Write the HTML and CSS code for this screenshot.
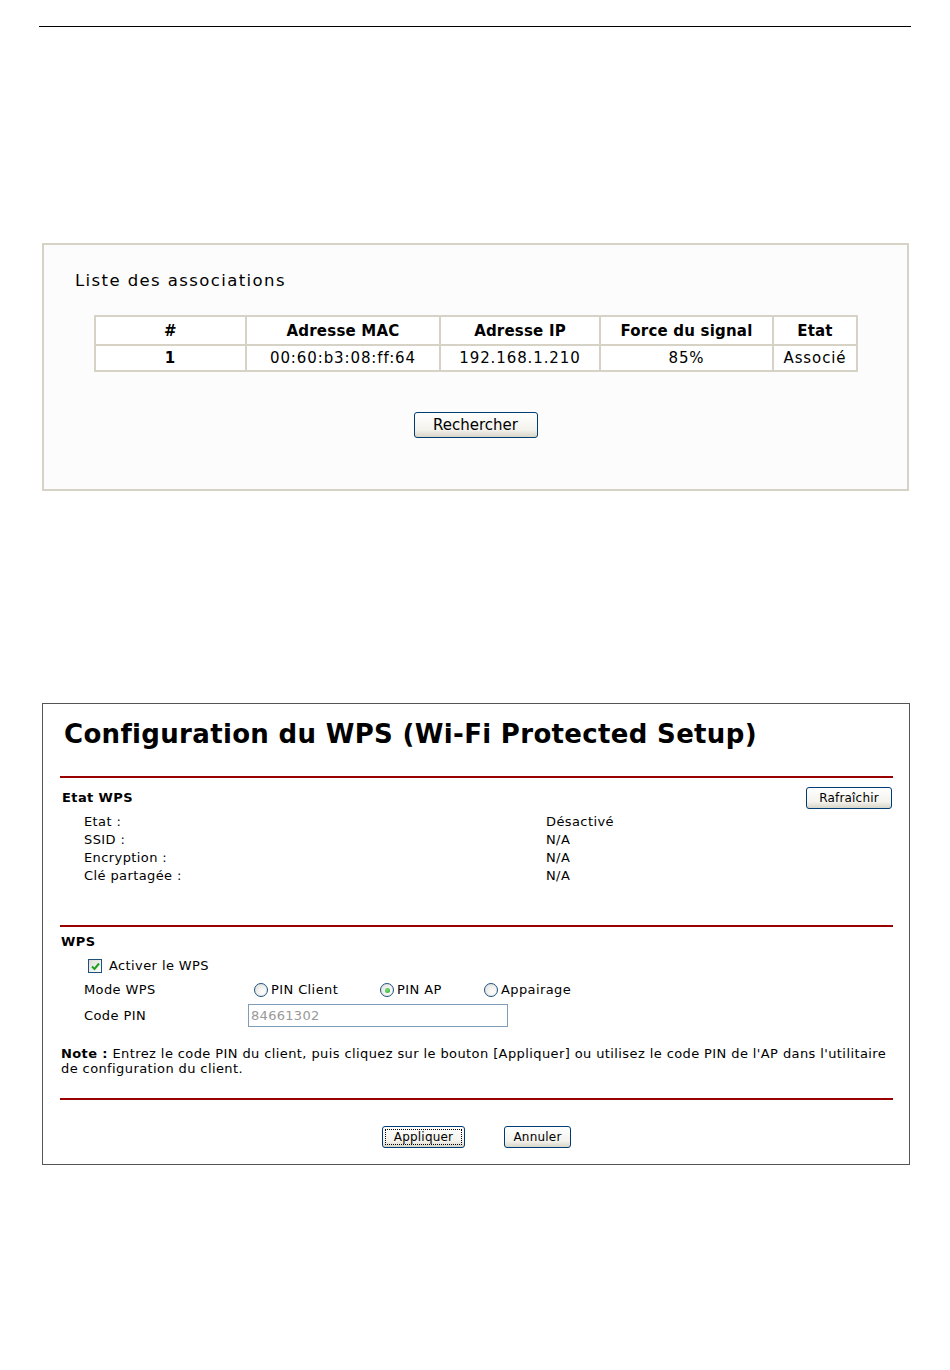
FILE: index.html
```html
<!DOCTYPE html>
<html lang="fr">
<head>
    <meta charset="UTF-8">
    <title>Liste des associations - Configuration du WPS</title>
    <link rel="stylesheet" href="styles.css">
</head>
<body>
    <div class="page-rule"></div>

    <div class="assoc-box">
        <h2 class="assoc-title">Liste des associations</h2>

        <table class="assoc-table">
            <tr>
                <th class="col-num">#</th>
                <th class="col-mac">Adresse MAC</th>
                <th class="col-ip">Adresse IP</th>
                <th class="col-signal">Force du signal</th>
                <th class="col-state">Etat</th>
            </tr>
            <tr>
                <td class="num">1</td>
                <td>00:60:b3:08:ff:64</td>
                <td>192.168.1.210</td>
                <td>85%</td>
                <td>Associé</td>
            </tr>
        </table>

        <div class="assoc-actions">
            <button class="xp-btn search-btn">Rechercher</button>
        </div>
    </div>

    <div class="wps-box">
        <h1 class="wps-title">Configuration du WPS (Wi-Fi Protected Setup)</h1>

        <div class="red-rule"></div>

        <div class="section-head">
            <span class="section-title">Etat WPS</span>
            <button class="xp-btn small-btn refresh-btn">Rafraîchir</button>
        </div>

        <div class="status-grid">
            <span>Etat :</span><span>Désactivé</span>
            <span>SSID :</span><span>N/A</span>
            <span>Encryption :</span><span>N/A</span>
            <span>Clé partagée :</span><span>N/A</span>
        </div>

        <div class="red-rule rule-wps"></div>

        <div class="section-title">WPS</div>

        <div class="check-row">
            <span class="checkbox">
                <svg width="9" height="9" viewBox="0 0 9 9"><path d="M1 4.5 L3.5 7 L8 1.5" fill="none" stroke="#21a121" stroke-width="2"/></svg>
            </span>
            <span>Activer le WPS</span>
        </div>

        <div class="form-row">
            <span class="form-label">Mode WPS</span>
            <div class="radios">
                <span class="radio-item r-client"><span class="radio"></span>PIN Client</span>
                <span class="radio-item r-ap"><span class="radio on"></span>PIN AP</span>
                <span class="radio-item"><span class="radio"></span>Appairage</span>
            </div>
        </div>

        <div class="form-row pin-row">
            <span class="form-label">Code PIN</span>
            <span class="pin-input">84661302</span>
        </div>

        <p class="note"><b>Note :</b> Entrez le code PIN du client, puis cliquez sur le bouton [Appliquer] ou utilisez le code PIN de l'AP dans l'utilitaire de configuration du client.</p>

        <div class="red-rule rule-bottom"></div>

        <div class="wps-actions">
            <button class="xp-btn small-btn apply-btn">Appliquer</button>
            <button class="xp-btn small-btn cancel-btn">Annuler</button>
        </div>
    </div>
</body>
</html>
```

FILE: styles.css
```css
body {
    margin: 0;
    padding: 26px 0 0 0;
    background-color: #fff;
    color: #000;
    font-family: "DejaVu Sans", Verdana, sans-serif;
}

.page-rule {
    margin-left: 39px;
    width: 872px;
    height: 1px;
    background-color: #000;
}

/* Liste des associations */

.assoc-box {
    margin: 216px 0 0 42px;
    width: 863px;
    border: 2px solid #d6d2c6;
    background-color: #fcfcfc;
    padding: 26px 0 51px 0;
}

.assoc-title {
    margin: 0 0 0 31px;
    font-size: 16.5px;
    letter-spacing: 1.4px;
    font-weight: normal;
    line-height: 20px;
}

.assoc-table {
    margin: 24px 0 0 50px;
    width: 764px;
    border-collapse: collapse;
    border: 2px solid #ccc8bc;
    background-color: #fff;
}

.assoc-table th,
.assoc-table td {
    border: 2px solid #d6d2c6;
    text-align: center;
    padding: 0;
}

.assoc-table th {
    height: 27px;
    font-size: 15px;
    font-weight: bold;
    letter-spacing: 0.2px;
}

.assoc-table td {
    height: 24px;
    font-size: 15px;
    letter-spacing: 0.9px;
}

.assoc-table td.num {
    font-weight: bold;
}

.col-num { width: 149px; }
.col-mac { width: 192px; }
.col-ip { width: 158px; }
.col-signal { width: 171px; }

.assoc-actions {
    margin-top: 40px;
    display: flex;
    justify-content: center;
}

.xp-btn {
    font-family: "DejaVu Sans", Verdana, sans-serif;
    color: #000;
    border: 1px solid #003c74;
    border-radius: 3px;
    background: linear-gradient(#ffffff, #f3f2ec 70%, #d8d5c8);
    padding: 0;
}

.search-btn {
    width: 124px;
    height: 26px;
    font-size: 15px;
}

/* Configuration du WPS */

.wps-box {
    margin: 212px 0 0 42px;
    width: 868px;
    border: 1px solid #555;
    padding: 0 16px 0 17px;
    box-sizing: border-box;
    font-size: 13px;
    letter-spacing: 0.4px;
}

.wps-title {
    margin: 13px 0 0 4px;
    font-size: 26px;
    letter-spacing: 0.33px;
    line-height: 34px;
    font-weight: bold;
}

.red-rule {
    height: 2px;
    background-color: #990000;
    margin-top: 25px;
}

.section-head {
    display: flex;
    justify-content: space-between;
    align-items: center;
    margin-top: 9px;
    padding-left: 1px;
}

.section-title {
    font-weight: bold;
    font-size: 13px;
    line-height: 18px;
    padding-left: 1px;
}

.small-btn {
    height: 22px;
    font-size: 12px;
    letter-spacing: 0.2px;
    padding: 0;
}

.refresh-btn { width: 86px; margin-right: 1px; }
.apply-btn { width: 83px; }
.cancel-btn { width: 67px; }

.status-grid {
    display: grid;
    grid-template-columns: 462px 1fr;
    line-height: 18px;
    padding-left: 24px;
    margin-top: 4px;
}

.rule-wps {
    margin-top: 40px;
}

.rule-wps + .section-title {
    margin-top: 6px;
}

.check-row {
    display: flex;
    align-items: center;
    gap: 7px;
    margin: 6px 0 0 28px;
    line-height: 18px;
}

.checkbox {
    width: 12px;
    height: 12px;
    border: 1px solid #1c5180;
    background: linear-gradient(135deg, #dcdcd7, #fff);
    display: flex;
    align-items: center;
    justify-content: center;
}

.form-row {
    display: flex;
    align-items: center;
    margin: 6px 0 0 24px;
    line-height: 18px;
}

.form-label {
    width: 164px;
}

.radios {
    display: flex;
    margin-left: 6px;
}

.radio-item {
    display: flex;
    align-items: center;
    gap: 3px;
}

.r-client { width: 126px; }
.r-ap { width: 104px; }

.radio {
    width: 12px;
    height: 12px;
    border: 1px solid #1c5180;
    border-radius: 50%;
    background: radial-gradient(circle at 65% 65%, #fff, #dcdcd6);
    display: flex;
    align-items: center;
    justify-content: center;
}

.radio.on::after {
    content: "";
    width: 5px;
    height: 5px;
    border-radius: 50%;
    background: radial-gradient(circle at 40% 40%, #7fe07f, #21a121);
}

.pin-row {
    margin-top: 5px;
}

.pin-input {
    width: 256px;
    height: 21px;
    border: 1px solid #7f9db9;
    color: #999;
    line-height: 21px;
    padding-left: 2px;
    letter-spacing: 0.3px;
}

.note {
    margin: 19px 0 0 1px;
    line-height: 15px;
}

.rule-bottom {
    margin-top: 22px;
}

.wps-actions {
    display: flex;
    justify-content: center;
    gap: 39px;
    margin: 26px 0 16px 0;
}

.apply-btn {
    outline: 1px dotted #000;
    outline-offset: -4px;
}
```
